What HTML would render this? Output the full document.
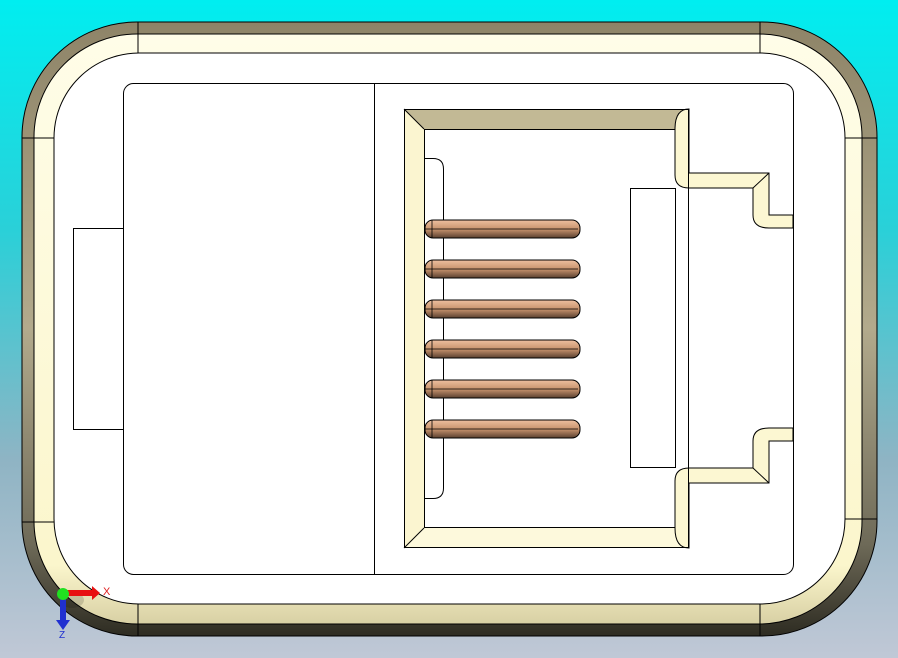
<!DOCTYPE html>
<html><head><style>
html,body{margin:0;padding:0;width:898px;height:658px;overflow:hidden}
</style></head><body>
<svg width="898" height="658" viewBox="0 0 898 658" xmlns="http://www.w3.org/2000/svg" style="display:block;font-family:'Liberation Sans',sans-serif">
<defs>
<linearGradient id="bg" x1="0" y1="0" x2="0" y2="1">
<stop offset="0" stop-color="#00eef0"/><stop offset="0.35" stop-color="#2ad0d8"/><stop offset="0.7" stop-color="#8fb4c4"/><stop offset="1" stop-color="#c0c8d6"/>
</linearGradient>
<linearGradient id="outer" x1="0" y1="0" x2="0" y2="1">
<stop offset="0" stop-color="#8e8468"/><stop offset="0.5" stop-color="#b2aa8c"/><stop offset="0.85" stop-color="#6e6a58"/><stop offset="1" stop-color="#2e2c22"/>
</linearGradient>
<linearGradient id="cream" x1="0" y1="0" x2="0" y2="1">
<stop offset="0" stop-color="#fffde8"/><stop offset="0.9" stop-color="#fbf6cc"/><stop offset="1" stop-color="#d8d0a4"/>
</linearGradient>
<linearGradient id="pin" x1="0" y1="0" x2="0" y2="1">
<stop offset="0" stop-color="#eec0a0"/><stop offset="0.5" stop-color="#c8946e"/><stop offset="1" stop-color="#5a4030"/>
</linearGradient>
</defs>
<rect width="898" height="658" fill="url(#bg)"/>
<rect x="22" y="22" width="855" height="614" rx="115" fill="url(#outer)" stroke="#000" stroke-width="1"/>
<rect x="34" y="34" width="828" height="590" rx="103" fill="url(#cream)" stroke="#000" stroke-width="1"/>
<rect x="54" y="53" width="791" height="551" rx="85" fill="#fff" stroke="#000" stroke-width="1"/>
<g stroke="#000" stroke-width="1">
<line x1="138" y1="22" x2="138" y2="53"/><line x1="760" y1="22" x2="760" y2="53"/>
<line x1="138" y1="604" x2="138" y2="636"/><line x1="760" y1="604" x2="760" y2="636"/>
<line x1="22" y1="138" x2="54" y2="138"/><line x1="22" y1="522" x2="54" y2="522"/>
<line x1="845" y1="138" x2="877" y2="138"/><line x1="845" y1="519" x2="877" y2="519"/>
</g>
<rect x="123.5" y="83.5" width="670" height="491" rx="10" fill="#fff" stroke="#000"/>
<line x1="374.5" y1="83" x2="374.5" y2="574" stroke="#000"/>
<rect x="73.5" y="228.5" width="50" height="201" fill="#fff" stroke="#000"/>
<!-- frame -->
<polygon points="404,109 689,109 689,129 424,129" fill="#c2b995"/>
<polygon points="404,109 424,129 424,528 404,548" fill="#fbf5d0"/>
<polygon points="404,548 424,528 675,528 689,548" fill="#fdf9dc"/>
<path d="M675,129 Q675,109 689,109 L689,173 L769,173 L769,215 L793,215 L793,228 L769,228 Q753,228 753,215 L753,188 L689,188 Q675,188 675,175 Z" fill="#fcf7d2" stroke="#000"/>
<path d="M675,528 Q675,548 689,548 L689,483 L769,483 L769,441 L793,441 L793,428 L769,428 Q753,428 753,441 L753,468 L689,468 Q675,468 675,481 Z" fill="#fcf7d2" stroke="#000"/>
<path d="M675,129.5 L424.5,129.5 L424.5,527.5 L675,527.5" fill="none" stroke="#000"/>
<g stroke="#000" fill="none">
<rect x="404.5" y="109.5" width="284" height="438"/>
<line x1="404" y1="109" x2="424" y2="129"/><line x1="404" y1="548" x2="424" y2="528"/>
<line x1="769" y1="173" x2="753" y2="188"/><line x1="769" y1="483" x2="753" y2="468"/>
<path d="M424.5,158.5 L433,158.5 Q443.5,158.5 443.5,169 L443.5,488 Q443.5,498.5 433,498.5 L424.5,498.5"/>
<rect x="630.5" y="188.5" width="45" height="279"/>
</g>
<!-- pins -->
<g stroke="#000" stroke-width="1">
<rect x="425" y="220" width="155" height="18" rx="8" fill="url(#pin)"/>
<rect x="425" y="260" width="155" height="18" rx="8" fill="url(#pin)"/>
<rect x="425" y="300" width="155" height="18" rx="8" fill="url(#pin)"/>
<rect x="425" y="340" width="155" height="18" rx="8" fill="url(#pin)"/>
<rect x="425" y="380" width="155" height="18" rx="8" fill="url(#pin)"/>
<rect x="425" y="420" width="155" height="18" rx="8" fill="url(#pin)"/>
</g>
<g stroke="#000" stroke-width="0.8" fill="none">
<line x1="425" y1="229" x2="578" y2="229"/><line x1="425" y1="269" x2="578" y2="269"/>
<line x1="425" y1="309" x2="578" y2="309"/><line x1="425" y1="349" x2="578" y2="349"/>
<line x1="425" y1="389" x2="578" y2="389"/><line x1="425" y1="429" x2="578" y2="429"/>
<line x1="432" y1="220" x2="432" y2="238"/><line x1="432" y1="260" x2="432" y2="278"/>
<line x1="432" y1="300" x2="432" y2="318"/><line x1="432" y1="340" x2="432" y2="358"/>
<line x1="432" y1="380" x2="432" y2="398"/><line x1="432" y1="420" x2="432" y2="438"/>
</g>
<!-- axis -->
<ellipse cx="72" cy="600" rx="12" ry="8" fill="#000" opacity="0.15"/>
<rect x="63" y="590" width="30" height="6" fill="#e81010"/>
<polygon points="92,586 100,593 92,600" fill="#e81010"/>
<text x="103" y="595" font-size="11" fill="#e02020">X</text>
<rect x="60" y="597" width="6" height="24" fill="#2030d0"/>
<polygon points="56,620 70,620 63,630" fill="#2030d0"/>
<text x="59" y="638" font-size="10" fill="#2030d0">Z</text>
<circle cx="63" cy="594" r="6" fill="#20e020"/>
</svg>
</body></html>
